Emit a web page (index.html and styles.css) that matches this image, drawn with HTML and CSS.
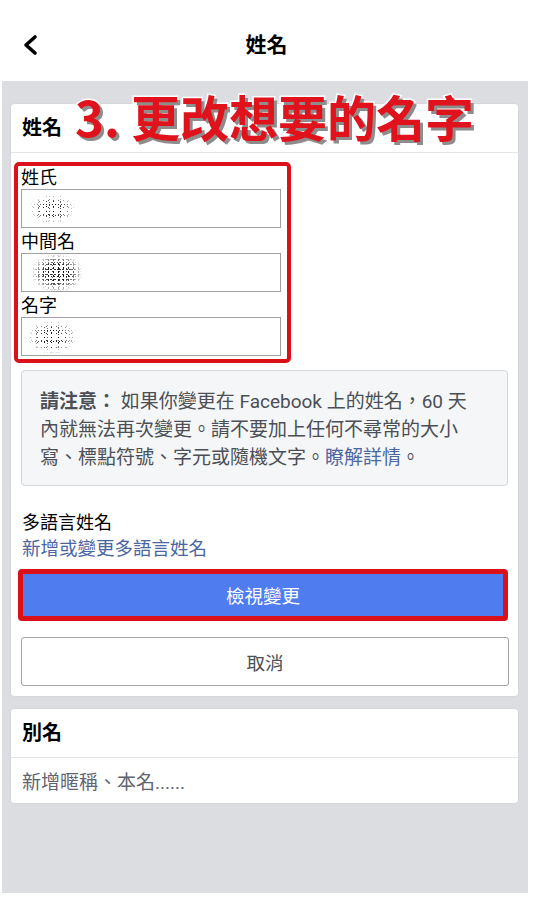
FILE: index.html
```html
<!DOCTYPE html>
<html lang="zh-Hant">
<head>
<meta charset="utf-8">
<title>姓名</title>
<link rel="stylesheet" href="styles.css">
</head>
<body>
<div class="screen">
  <header class="topbar">
    <div class="topbar-left">
      <svg class="back" width="16" height="22" viewBox="0 0 16 22" aria-hidden="true">
        <polyline points="13,3 4,11 13,19" fill="none" stroke="#000" stroke-width="3.6" stroke-linecap="round" stroke-linejoin="round"/>
      </svg>
    </div>
    <h1 class="title">姓名</h1>
    <div class="topbar-right"></div>
  </header>

  <main class="content">
    <section class="card">
      <div class="card-head">
        <h2 class="card-title">姓名</h2>
        <span class="annot">3. 更改想要的名字</span>
      </div>
      <div class="card-body">
        <div class="fields">
          <div class="field">
            <div class="field-label">姓氏</div>
            <div class="input"><span class="blur blur-a"></span></div>
          </div>
          <div class="field">
            <div class="field-label">中間名</div>
            <div class="input"><span class="blur blur-b"></span></div>
          </div>
          <div class="field">
            <div class="field-label">名字</div>
            <div class="input"><span class="blur blur-c"></span></div>
          </div>
        </div>

        <div class="notice">
          <strong>請注意：</strong> 如果你變更在 Facebook 上的姓名，60 天<br>內就無法再次變更。請不要加上任何不尋常的大小<br>寫、標點符號、字元或隨機文字。<a class="link" href="#">瞭解詳情</a>。
        </div>

        <div class="multi">
          <div class="multi-title">多語言姓名</div>
          <a class="link multi-link" href="#">新增或變更多語言姓名</a>
        </div>

        <div class="primary-frame">
          <button class="primary" type="button">檢視變更</button>
        </div>
        <button class="cancel" type="button">取消</button>
      </div>
    </section>

    <section class="card">
      <div class="card-head">
        <h2 class="card-title">別名</h2>
      </div>
      <div class="row">新增暱稱、本名......</div>
    </section>
  </main>
</div>
</body>
</html>
```

FILE: styles.css
```css
* { box-sizing: border-box; }

html, body {
  margin: 0;
  padding: 0;
  background: #ffffff;
}

body {
  font-family: Roboto, "Noto Sans CJK TC", sans-serif;
  color: #1d2129;
}

.screen {
  width: 533px;
}

/* top navigation */
.topbar {
  height: 81px;
  padding-top: 9px;
  display: grid;
  grid-template-columns: 1fr auto 1fr;
  align-items: center;
}

.topbar-left {
  padding-left: 22px;
  display: flex;
  align-items: center;
}

.back { display: block; }

.title {
  margin: 0;
  font-size: 21px;
  font-weight: 700;
  line-height: 28px;
  color: #000;
}

/* grey content area */
.content {
  margin: 0 5px 0 2px;
  height: 812px;
  background: #dcdde1;
  padding: 22px 9px 0 8px;
  display: flex;
  flex-direction: column;
  gap: 11px;
}

.card {
  background: #ffffff;
  border: 1px solid #d5d7db;
  border-radius: 4px;
}

.card-head {
  position: relative;
  height: 49px;
  padding-left: 11px;
  border-bottom: 1px solid #e3e5e8;
  display: flex;
  align-items: center;
}

.card-title {
  margin: 0;
  font-size: 20px;
  font-weight: 700;
  line-height: 28px;
  color: #000;
}

.annot {
  position: absolute;
  left: 64px;
  top: -13px;
  font-family: "Noto Sans CJK TC", sans-serif;
  font-size: 49px;
  line-height: 50px;
  font-weight: 700;
  color: #e0121c;
  -webkit-text-stroke: 3px #ffffff;
  paint-order: stroke fill;
  text-shadow: 3px 3px 0 #8d8d8d;
  white-space: nowrap;
}

.card-body {
  padding: 9px 0 10px 0;
}

/* red annotated field group */
.fields {
  margin-left: 3px;
  width: 277px;
  border: 4px solid #dc1019;
  border-radius: 5px;
  padding: 0 6px 3px 3px;
  display: flex;
  flex-direction: column;
  gap: 2px;
}

.field-label {
  font-size: 18px;
  line-height: 23px;
  color: #000;
}

.input {
  height: 39px;
  border: 1px solid #9ea1a6;
  background: #fff;
  display: flex;
  align-items: center;
  padding-left: 5px;
}

.blur {
  display: block;
  background-image:
    radial-gradient(circle, #111 0.7px, transparent 1px),
    radial-gradient(circle, #333 0.6px, transparent 0.9px),
    radial-gradient(circle, #555 0.6px, transparent 0.9px),
    radial-gradient(circle, #222 0.55px, transparent 0.85px);
  background-size: 7px 5px, 5px 7px, 11px 3px, 3px 11px;
  background-position: 0 0, 2px 3px, 4px 1px, 1px 5px;
  -webkit-mask-image: radial-gradient(ellipse at center, #000 30%, rgba(0,0,0,0.45) 55%, transparent 72%);
  mask-image: radial-gradient(ellipse at center, #000 30%, rgba(0,0,0,0.45) 55%, transparent 72%);
}

.blur-a { width: 46px; height: 30px; margin-left: 2px; }
.blur-b { width: 52px; height: 38px; margin-left: 4px; background-size: 5px 4px, 4px 5px, 7px 3px, 3px 7px; }
.blur-c { width: 50px; height: 34px; }

/* notice box */
.notice {
  margin: 7px 10px 0 10px;
  background: #f5f6f7;
  border: 1px solid #d4d6da;
  border-radius: 4px;
  padding: 17px 18px 13px 18px;
  font-size: 19px;
  line-height: 28px;
  color: #4b4f56;
  white-space: nowrap;
}

.notice strong {
  font-weight: 700;
  color: #4b4f56;
}

.link {
  color: #4a66a3;
  text-decoration: none;
}

.multi {
  margin-top: 24px;
  padding-left: 11px;
  display: flex;
  flex-direction: column;
}

.multi-title {
  font-size: 18px;
  line-height: 26px;
  color: #000;
}

.multi-link {
  font-size: 18.5px;
  line-height: 26px;
}

/* buttons */
.primary-frame {
  margin: 7px 10px 0 7px;
  height: 52px;
  border: 5px solid #dc1019;
  border-radius: 4px;
  display: flex;
}

.primary {
  flex: 1;
  border: 0;
  margin: 0;
  background: #4f7cef;
  color: #ffffff;
  font-family: "Noto Sans CJK TC", sans-serif;
  font-size: 18.5px;
  line-height: 26px;
  padding: 0;
}

.cancel {
  display: block;
  margin: 16px 9px 0 10px;
  width: calc(100% - 19px);
  height: 49px;
  background: #ffffff;
  border: 1px solid #a0a3a8;
  border-radius: 3px;
  color: #4b4f56;
  font-family: "Noto Sans CJK TC", sans-serif;
  font-size: 18.5px;
  line-height: 26px;
  padding: 0;
}

/* alias card */
.row {
  height: 45px;
  padding-left: 11px;
  display: flex;
  align-items: center;
  font-size: 19px;
  color: #5f6470;
}
```
